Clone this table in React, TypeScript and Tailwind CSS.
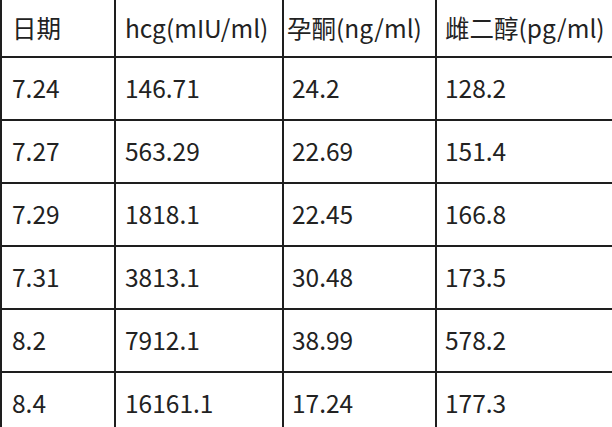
const header = ["日期", "hcg(mIU/ml)", "孕酮(ng/ml)", "雌二醇(pg/ml)"];

const rows = [
  ["7.24", "146.71", "24.2", "128.2"],
  ["7.27", "563.29", "22.69", "151.4"],
  ["7.29", "1818.1", "22.45", "166.8"],
  ["7.31", "3813.1", "30.48", "173.5"],
  ["8.2", "7912.1", "38.99", "578.2"],
  ["8.4", "16161.1", "17.24", "177.3"],
];

const cols = ["w-[116px] border-l-2 pl-[10px]", "w-[168px] pl-[9px]", "w-[153px] pl-2", "flex-1 pl-2"];

function Row({ cells, head }: { cells: string[]; head?: boolean }) {
  return (
    <div className={`flex border-b-2 border-[#1e1e1e] ${head ? "h-[58px]" : "h-[63px]"}`}>
      {cells.map((c, i) => (
        <div
          key={i}
          className={`flex items-center whitespace-nowrap border-r-2 border-[#1e1e1e] ${cols[i]} ${head && i === 2 ? "!pl-[3px]" : ""}`}
        >
          {c}
        </div>
      ))}
    </div>
  );
}

export default function App() {
  return (
    <div
      className="w-[612px] h-[427px] overflow-hidden bg-white text-[24.5px] text-[#222]"
      style={{ fontFamily: '"Noto Sans CJK SC", "Noto Sans", sans-serif' }}
    >
      <div className="w-[640px]">
        <Row cells={header} head />
        {rows.map((r, i) => (
          <Row key={i} cells={r} />
        ))}
      </div>
    </div>
  );
}
